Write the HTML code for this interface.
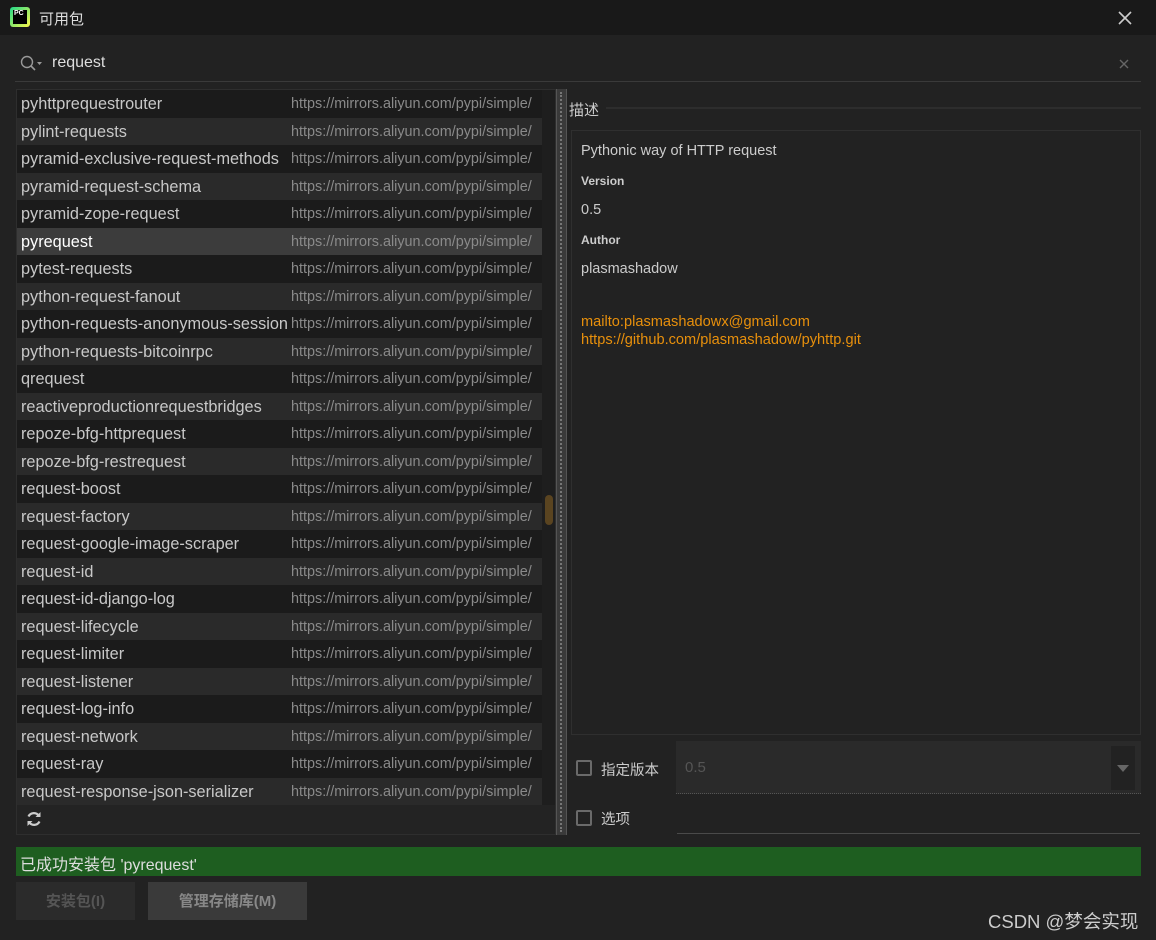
<!DOCTYPE html>
<html><head><meta charset="utf-8"><style>
*{margin:0;padding:0;box-sizing:border-box}
body{width:1156px;height:940px;background:#222;font-family:"Liberation Sans","Noto Sans CJK SC",sans-serif;position:relative;overflow:hidden;color:#ccc}
.a{position:absolute}
#title{left:0;top:0;width:1156px;height:35px;background:#191919}
.row{position:absolute;left:17px;width:525px;height:27.5px;line-height:28px}
.row .n{position:absolute;left:4px;color:#c8c8c8;font-size:16.3px}
.row .u{position:absolute;left:274px;color:#8a8a8a;font-size:14.4px}
.cb{position:absolute;width:16px;height:16px;border:2px solid #6a6a6a;border-radius:2px}
</style></head><body>
<div class="a" id="title"></div>
<div class="a" style="left:10px;top:7px;width:20px;height:20px;background:linear-gradient(135deg,#21d789,#fcf84a);border-radius:3px"></div>
<div class="a" style="left:13px;top:10px;width:14px;height:14px;background:#000;color:#fff;font-size:7px;font-weight:bold;line-height:8px;padding-left:1px">PC</div>
<div class="a" style="left:39px;top:8px;font-size:15px;color:#ddd">可用包</div>
<svg class="a" style="left:1118px;top:11px" width="14" height="14"><path d="M1 1L13 13M13 1L1 13" stroke="#ccc" stroke-width="1.6"/></svg>
<svg class="a" style="left:20px;top:55px" width="24" height="18"><circle cx="7" cy="7" r="5.5" fill="none" stroke="#999" stroke-width="1.4"/><path d="M11 11L15 15" stroke="#999" stroke-width="1.6"/><path d="M17 7h5l-2.5 3z" fill="#999"/></svg>
<div class="a" style="left:52px;top:54px;font-size:16px;color:#ddd">request</div>
<svg class="a" style="left:1119px;top:59px" width="10" height="10"><path d="M1 1L9 9M9 1L1 9" stroke="#666" stroke-width="1.4"/></svg>
<div class="a" style="left:15px;top:81px;width:1126px;height:1px;background:#3a3a3a"></div>
<div class="a" style="left:16px;top:89px;width:540px;height:746px;background:#232323;border:1px solid #2e2e2e"></div>
<div id="list"></div>
<div class="a" style="left:542px;top:90px;width:13px;height:715px;background:#1e1e1e"></div>
<div class="a" style="left:545px;top:495px;width:8px;height:30px;background:#5a4420;border-radius:4px"></div>
<svg class="a" style="left:25px;top:810px" width="18" height="18" viewBox="0 0 18 18"><path d="M14 6A6 6 0 0 0 3.5 6.5M4 12a6 6 0 0 0 10.5-.5" fill="none" stroke="#ccc" stroke-width="2.2"/><path d="M15.5 2v5h-5z M2.5 16v-5h5z" fill="#ccc"/></svg>
<div class="a" style="left:556px;top:89px;width:11px;height:746px;background:#3a3a3a;border-left:1px solid #555;border-right:1px solid #555"></div>
<div class="a" style="left:560px;top:92px;width:2px;height:740px;border-left:2px dotted #777"></div>
<div class="a" style="left:569px;top:99px;font-size:15px;color:#ccc">描述</div>
<div class="a" style="left:606px;top:107px;width:535px;height:2px;background:#2d2d2d"></div>
<div class="a" style="left:571px;top:130px;width:570px;height:605px;background:#222;border:1px solid #2f2f2f"></div>
<div class="a" style="left:581px;top:143px;font-size:14.5px;color:#ccc">Pythonic way of HTTP request</div>
<div class="a" style="left:581px;top:174px;font-size:12px;color:#ccc;font-weight:bold">Version</div>
<div class="a" style="left:581px;top:202px;font-size:14.5px;color:#ccc">0.5</div>
<div class="a" style="left:581px;top:233px;font-size:12px;color:#ccc;font-weight:bold">Author</div>
<div class="a" style="left:581px;top:261px;font-size:14.5px;color:#ccc">plasmashadow</div>
<div class="a" style="left:581px;top:313px;font-size:14.6px;color:#e8900c;line-height:18px">mailto:plasmashadowx@gmail.com<br>https://github.com/plasmashadow/pyhttp.git</div>
<div class="cb" style="left:576px;top:760px"></div>
<div class="a" style="left:601px;top:759px;font-size:14.5px;color:#ccc">指定版本</div>
<div class="a" style="left:676px;top:741px;width:465px;height:53px;background:#2a2a2a;border-bottom:1px dotted #555"></div>
<div class="a" style="left:685px;top:759px;font-size:15px;color:#555">0.5</div>
<div class="a" style="left:1111px;top:746px;width:24px;height:44px;background:#222"></div>
<svg class="a" style="left:1117px;top:765px" width="12" height="8"><path d="M0 0h12l-6 7z" fill="#666"/></svg>
<div class="cb" style="left:576px;top:810px"></div>
<div class="a" style="left:601px;top:808px;font-size:14.5px;color:#ccc">选项</div>
<div class="a" style="left:677px;top:833px;width:463px;height:1px;background:#4a4a4a"></div>
<div class="a" style="left:16px;top:847px;width:1125px;height:29px;background:#1e5e20"></div>
<div class="a" style="left:20px;top:851px;font-size:16px;color:#ddd">已成功安装包 'pyrequest'</div>
<div class="a" style="left:16px;top:882px;width:119px;height:38px;background:#2b2b2b;color:#555;font-size:15px;font-weight:bold;text-align:center;line-height:40px">安装包(I)</div>
<div class="a" style="left:148px;top:882px;width:159px;height:38px;background:#3a3a3a;color:#888;font-size:15px;font-weight:bold;text-align:center;line-height:40px">管理存储库(M)</div>
<div class="a" style="left:988px;top:908px;font-size:18.5px;color:#ccc">CSDN @梦会实现</div>
<script>
var list=["pyhttprequestrouter","pylint-requests","pyramid-exclusive-request-methods","pyramid-request-schema","pyramid-zope-request","pyrequest","pytest-requests","python-request-fanout","python-requests-anonymous-session","python-requests-bitcoinrpc","qrequest","reactiveproductionrequestbridges","repoze-bfg-httprequest","repoze-bfg-restrequest","request-boost","request-factory","request-google-image-scraper","request-id","request-id-django-log","request-lifecycle","request-limiter","request-listener","request-log-info","request-network","request-ray","request-response-json-serializer"];
var out="";
for(var i=0;i<list.length;i++){
var bg=i==5?"#3c3c3c":(i%2?"#2a2a2a":"#1b1b1b");
var c=i==5?"color:#fff":"";
out+='<div class="row" style="top:'+(90+i*27.5)+'px;background:'+bg+'"><span class="n" style="'+c+'">'+list[i]+'</span><span class="u">https://mirrors.aliyun.com/pypi/simple/</span></div>';}
document.getElementById("list").innerHTML=out;
</script>
</body></html>
